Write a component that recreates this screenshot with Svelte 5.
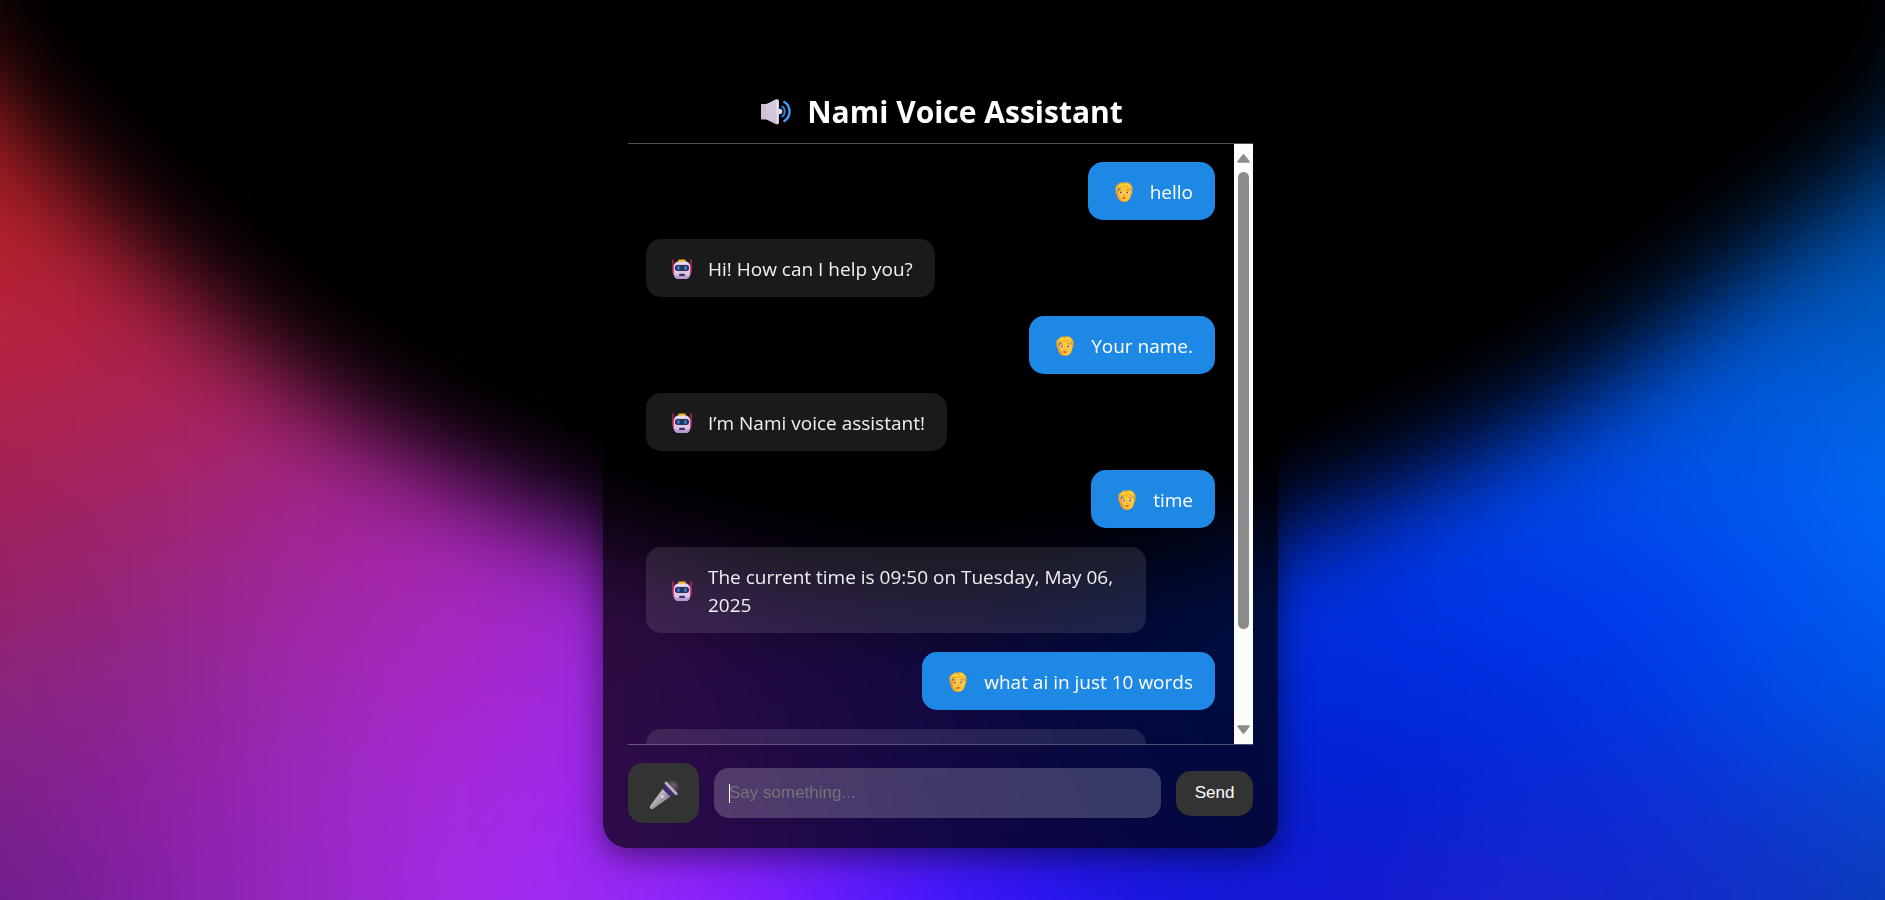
<script>
  const messages = [
    { from: 'user', text: 'hello' },
    { from: 'bot', text: 'Hi! How can I help you?' },
    { from: 'user', text: 'Your name.' },
    { from: 'bot', text: 'I’m Nami voice assistant!' },
    { from: 'user', text: 'time' },
    { from: 'bot', text: 'The current time is 09:50 on Tuesday, May 06, 2025' },
    { from: 'user', text: 'what ai in just 10 words' },
    { from: 'bot', text: '', pending: true }
  ];

  let draft = $state('');

  // Colour field of the backdrop: one row per 100 units from y=200, one column per 150 units from x=0.
  const field = [
    'b02025 b02030 a82050 a02480 9828a0 6020b0 3018b0 1020a0 0028a0 0030a0 0038a0 0044a0 004ca0 0050a8',
    'b82338 b02040 a82450 a02490 9828b0 6a20c0 3018b8 1020b0 0028b0 0034b8 003cb8 0048b4 0052b8 005cc0',
    'b02248 ab2355 a82468 a42488 9828b8 6a20c8 4018c0 1020c0 0030c8 003ccc 0040d0 0050d4 005cdc 0068e0',
    'a02258 a02468 a0268c a424a4 9c28c4 7020d4 481ccc 1820c8 0030d0 0036dc 0042e4 004ce8 005cf0 006ef8',
    '962268 942580 a026a0 a628b8 9c28d0 7020d8 4c20d8 1824c8 002cd0 0030e0 0036e6 003eee 0052f0 0064f2',
    '882680 8c2490 9c28b0 a828cc 9e28e4 7022e0 4a20dc 1822d0 0026d0 0028dc 002cde 0038e2 004ae4 0058e4',
    '7c2088 8c20a0 9828be a62adc 9e28f0 7c22f0 4c1ce4 2018d8 0a1cd4 0420d0 0826d4 0e2ed4 0a3cd0 084acc',
    '6c1e88 8520a8 9428c0 a42ae8 9a2af5 841fff 5018ff 2a14f0 1418d8 1818d4 1c22cc 1428cc 1034c0 0840b4'
  ].map((row) => row.split(' '));

  const cells = [];
  for (let r = -1; r < 10; r++) {
    for (let c = -1; c < 15; c++) {
      const row = field[Math.min(Math.max(r, 0), 7)];
      cells.push({
        x: c * 150 - 75,
        y: 150 + r * 100,
        fill: '#' + row[Math.min(Math.max(c, 0), 13)]
      });
    }
  }
</script>

<svg class="backdrop" viewBox="0 0 1885 900" preserveAspectRatio="none" aria-hidden="true">
  <defs>
    <filter id="melt" filterUnits="userSpaceOnUse" x="-300" y="-100" width="2500" height="1300" color-interpolation-filters="sRGB">
      <feGaussianBlur stdDeviation="65 45" />
    </filter>
    <filter id="soft" filterUnits="userSpaceOnUse" x="-400" y="-500" width="2700" height="1600" color-interpolation-filters="sRGB">
      <feGaussianBlur stdDeviation="50" />
    </filter>
  </defs>
  <g filter="url(#melt)">
    <rect x="-300" y="-100" width="1200" height="260" fill="#b02025" />
    <rect x="900" y="-100" width="1300" height="260" fill="#0050a8" />
    {#each cells as cell}
      <rect x={cell.x} y={cell.y} width="151" height="101" fill={cell.fill} />
    {/each}
  </g>
  <path
    filter="url(#soft)"
    d="M-160-400 L-80 0 C-10 105 80 200 190 290 C260 350 320 400 383 435 C440 468 500 496 560 521 C700 576 800 596 940 596 C1060 596 1190 560 1300 525 C1380 498 1450 463 1514 428 C1590 388 1650 342 1717 284 C1790 232 1860 180 1930 125 L2110-400Z"
  />
</svg>

{#snippet robot()}
  <svg class="avatar" viewBox="0 0 20 20" aria-hidden="true">
    <path d="M1.500 7v9M18.500 7v9" stroke="#a81d50" stroke-width="1.400" />
    <path d="M1 .5v13M19 .5v13" stroke="#f02f5c" stroke-width="1.100" />
    <rect x="6.300" y="0.600" width="7.400" height="3" rx="1" fill="#ffb515" />
    <rect x="1.800" y="2.600" width="16.400" height="17.200" rx="4.500" fill="#d9c5e7" />
    <path d="M2 15c1 2.600 15 2.600 16 0 0 3.500-1.800 4.800-4.500 4.800h-7C3.800 19.800 2 18.500 2 15z" fill="#b99ad5" />
    <path d="M5 4.100h10" stroke="#f3e8f8" stroke-width="1.200" stroke-linecap="round" />
    <rect x="3" y="6" width="14" height="6" rx="2.700" fill="#352c57" />
    <ellipse cx="6.500" cy="9" rx="1.100" ry="1.900" fill="#15a9f7" />
    <ellipse cx="13.500" cy="9" rx="1.100" ry="1.900" fill="#15a9f7" />
    <rect x="7.200" y="14.800" width="5.600" height="2.200" rx="0.500" fill="#3d315e" />
  </svg>
{/snippet}

{#snippet person()}
  <svg class="avatar" viewBox="1 0 18 20" aria-hidden="true">
    <path d="M2 8.500c-1 1-.6 3.500.8 3.900C3.500 17 6 20 10 20s6.500-3 7.200-7.600c1.400-.4 1.800-2.900.8-3.900z" fill="#f59a2c" />
    <path d="M6 4h10l1.200 7.500C16.500 16.500 14.500 19.200 11.300 19.200 7.500 19.200 5 16 5 10z" fill="#ffc63b" />
    <path d="M1.900 9.300C.9 6 1.600 3.300 3.900 2.700 5 .7 7.500-.1 9.800.7c3-1.300 6.300.1 7.100 2.300 1.700 1.200 2 3.600 1.200 6.300-.9-.7-1.300-2-1.500-3.400-2.200.3-4.300-.5-5.400-1.700C9.500 5.900 6.500 6.200 4.700 5.900 4.400 7.600 3.100 9 1.900 9.300z" fill="#fbb324" />
    <path d="M5 3.700c2-.9 3.200-.9 5-.4M11.500 2.600c2-.5 3.500.4 4.500 2" stroke="#ffe052" stroke-width="1.200" fill="none" stroke-linecap="round" />
    <path d="M5 8.200c.7-.6 1.700-.6 2.400-.2M12.600 8c.8-.4 1.700-.4 2.400.2" stroke="#a85e28" stroke-width=".8" fill="none" />
    <ellipse cx="6.600" cy="10.600" rx="1.500" ry="1.200" fill="#fff" />
    <ellipse cx="13.400" cy="10.600" rx="1.500" ry="1.200" fill="#fff" />
    <circle cx="6.800" cy="10.600" r="1" fill="#6e4056" />
    <circle cx="13.200" cy="10.600" r="1" fill="#6e4056" />
    <path d="M9.300 13.300h1.400" stroke="#f07a20" stroke-width=".8" />
    <path d="M7.800 15.600h4.400c-.7 1.500-3.700 1.500-4.400 0z" fill="#b22c3e" />
  </svg>
{/snippet}

<div class="page">
  <main class="panel">
    <h1>
      <svg class="speaker" viewBox="0 0 30 26" aria-hidden="true">
        <defs>
          <linearGradient id="cone" x1="0" y1="0" x2="0" y2="1">
            <stop offset="0" stop-color="#d8cfdc" />
            <stop offset="1" stop-color="#cfbfd8" />
          </linearGradient>
        </defs>
        <circle cx="18.500" cy="12.500" r="2.800" fill="#e8e0ec" />
        <rect x="0" y="5" width="7" height="15.500" rx="1" fill="#cbc1cf" />
        <path d="M5 5.300 14.500.6C16.500-.2 18 .5 18 2.500v20.800c0 2-1.500 2.600-3.500 1.700L5 20.200z" fill="url(#cone)" />
        <path d="M16.200 1.500v22.800" stroke="#f1ebf3" stroke-width="1" />
        <path d="M21.300 7.600c3.200 2 3.200 7.800 0 9.800" fill="none" stroke="#2784e8" stroke-width="2" stroke-linecap="round" />
        <path d="M23.300 3c7 4.300 7 14.700 0 19" fill="none" stroke="#45a0ff" stroke-width="2.300" stroke-linecap="round" />
      </svg>
      <span>Nami Voice Assistant</span>
    </h1>

    <section class="chat" aria-label="Conversation">
      <div class="messages">
        {#each messages as message}
          <div class="bubble {message.from}" class:pending={message.pending}>
            {#if !message.pending}
              <span class="face">
                {#if message.from === 'bot'}{@render robot()}{:else}{@render person()}{/if}
              </span>
              <span>{message.text}</span>
            {/if}
          </div>
        {/each}
      </div>
      <div class="scrollbar" aria-hidden="true">
        <svg viewBox="0 0 13 9"><path d="M6.500 1.200 11.800 7.800H1.200z" fill="#8b8b8b" stroke="#8b8b8b" stroke-width="2" stroke-linejoin="round" /></svg>
        <div class="track"><div class="thumb"></div></div>
        <svg viewBox="0 0 13 9"><path d="M6.500 7.800 11.800 1.200H1.200z" fill="#8b8b8b" stroke="#8b8b8b" stroke-width="2" stroke-linejoin="round" /></svg>
      </div>
    </section>

    <form class="composer" onsubmit={(event) => event.preventDefault()}>
      <button class="mic" type="button" aria-label="Speak">
        <svg viewBox="0 0 30 30" aria-hidden="true">
          <defs>
            <linearGradient id="handle" x1="0" y1="0" x2="1" y2="1">
              <stop offset="0.300" stop-color="#c9c1cd" />
              <stop offset="0.700" stop-color="#8e8494" />
            </linearGradient>
            <radialGradient id="grille" cx="0.600" cy="0.350" r="0.600">
              <stop offset="0" stop-color="#6d6174" />
              <stop offset="1" stop-color="#352741" />
            </radialGradient>
          </defs>
          <circle cx="22.500" cy="7.500" r="7.200" fill="url(#grille)" />
          <path d="M13.800 8.800 21.600 16.500 4.200 28.800C2.200 30.100-.1 27.900 1.200 25.800z" fill="url(#handle)" />
          <path d="M13.600 9 16 3.800 26.400 14.200 21.300 16.800z" fill="#47296f" />
          <path d="M17 3 27.200 13.800" stroke="#b9b1bd" stroke-width="2.800" stroke-linecap="round" />
          <circle cx="13.300" cy="16.700" r="1.400" fill="#e9e5ec" />
        </svg>
      </button>
      <div class="field" class:empty={!draft}>
        <input type="text" placeholder="Say something..." aria-label="Message" bind:value={draft} />
      </div>
      <button class="send" type="submit">Send</button>
    </form>
  </main>
</div>

<style>
  :global(body) {
    margin: 0;
    background: #000;
  }

  .backdrop {
    position: fixed;
    inset: 0;
    width: 100%;
    height: 100%;
    z-index: -1;
  }

  .page {
    box-sizing: border-box;
    min-height: 100vh;
    display: flex;
    align-items: center;
    justify-content: center;
    padding-right: 4px;
    color: #fff;
    font-family: 'Open Sans', 'Noto Sans', sans-serif;
  }

  .panel {
    width: 100%;
    max-width: 625px;
    padding: 25px;
    border-radius: 25px;
    background: rgba(0, 0, 0, 0.7);
    backdrop-filter: blur(10px);
    box-shadow: 0 8px 32px rgba(0, 0, 0, 0.5);
  }

  h1 {
    box-sizing: border-box;
    display: flex;
    align-items: center;
    justify-content: center;
    gap: 16px;
    margin: 0;
    height: 66px;
    padding: 3px 0 0 3px;
    font-size: 30px;
    line-height: 40px;
    font-weight: 700;
  }

  .speaker {
    width: 30px;
    height: 26px;
  }

  .chat {
    display: flex;
    height: min(600px, calc(100vh - 300px));
    border-top: 1px solid rgba(255, 255, 255, 0.3);
    border-bottom: 1px solid rgba(255, 255, 255, 0.3);
  }

  .messages {
    flex: 1;
    display: flex;
    flex-direction: column;
    gap: 19px;
    padding: 18px 19px 0 18px;
    overflow: hidden;
  }

  .bubble {
    box-sizing: border-box;
    flex: none;
    display: flex;
    align-items: center;
    gap: 12px;
    max-width: 500px;
    min-height: 58px;
    padding: 16px 22px 14px;
    border-radius: 15px;
    font-size: 19px;
    line-height: 28px;
  }

  .bot {
    align-self: flex-start;
    background: rgba(255, 255, 255, 0.1);
    color: #f1f1f1;
  }

  .user {
    align-self: flex-end;
    background: #1e88e5;
  }

  .pending {
    width: 100%;
  }

  .face {
    flex: none;
    display: flex;
    justify-content: center;
    width: 28px;
  }

  .avatar {
    width: 20px;
    height: 20px;
  }

  .user .avatar {
    width: 18px;
  }

  .scrollbar {
    box-sizing: border-box;
    display: flex;
    flex-direction: column;
    align-items: center;
    gap: 9px;
    width: 19px;
    padding: 10px 0;
    background: #fcfcfc;
  }

  .scrollbar svg {
    flex: none;
    width: 13px;
    height: 9px;
  }

  .track {
    flex: 1;
    width: 11px;
  }

  .thumb {
    height: 84%;
    border-radius: 6px;
    background: #8b8b8b;
  }

  .composer {
    display: flex;
    align-items: center;
    gap: 15px;
    margin-top: 18px;
  }

  button,
  input {
    box-sizing: border-box;
    border: 0;
    border-radius: 15px;
    color: #fff;
    font-family: 'Liberation Sans', Arial, sans-serif;
    font-size: 17px;
    line-height: 20px;
  }

  button {
    flex: none;
    background: #333;
    cursor: pointer;
  }

  .mic {
    display: flex;
    align-items: center;
    justify-content: center;
    width: 71px;
    height: 60px;
    padding: 3px 0 0;
  }

  .mic svg {
    width: 30px;
    height: 30px;
  }

  .send {
    width: 77px;
    height: 45px;
    padding: 0;
  }

  .field {
    position: relative;
    flex: 1;
    display: flex;
  }

  .field.empty::before {
    content: '';
    position: absolute;
    left: 15px;
    top: 16px;
    width: 1px;
    height: 19px;
    background: #fff;
  }

  input {
    width: 100%;
    height: 50px;
    padding: 0 15px;
    outline: 0;
    background: rgba(255, 255, 255, 0.2);
  }

  input::placeholder {
    color: #757575;
    opacity: 1;
  }
</style>
